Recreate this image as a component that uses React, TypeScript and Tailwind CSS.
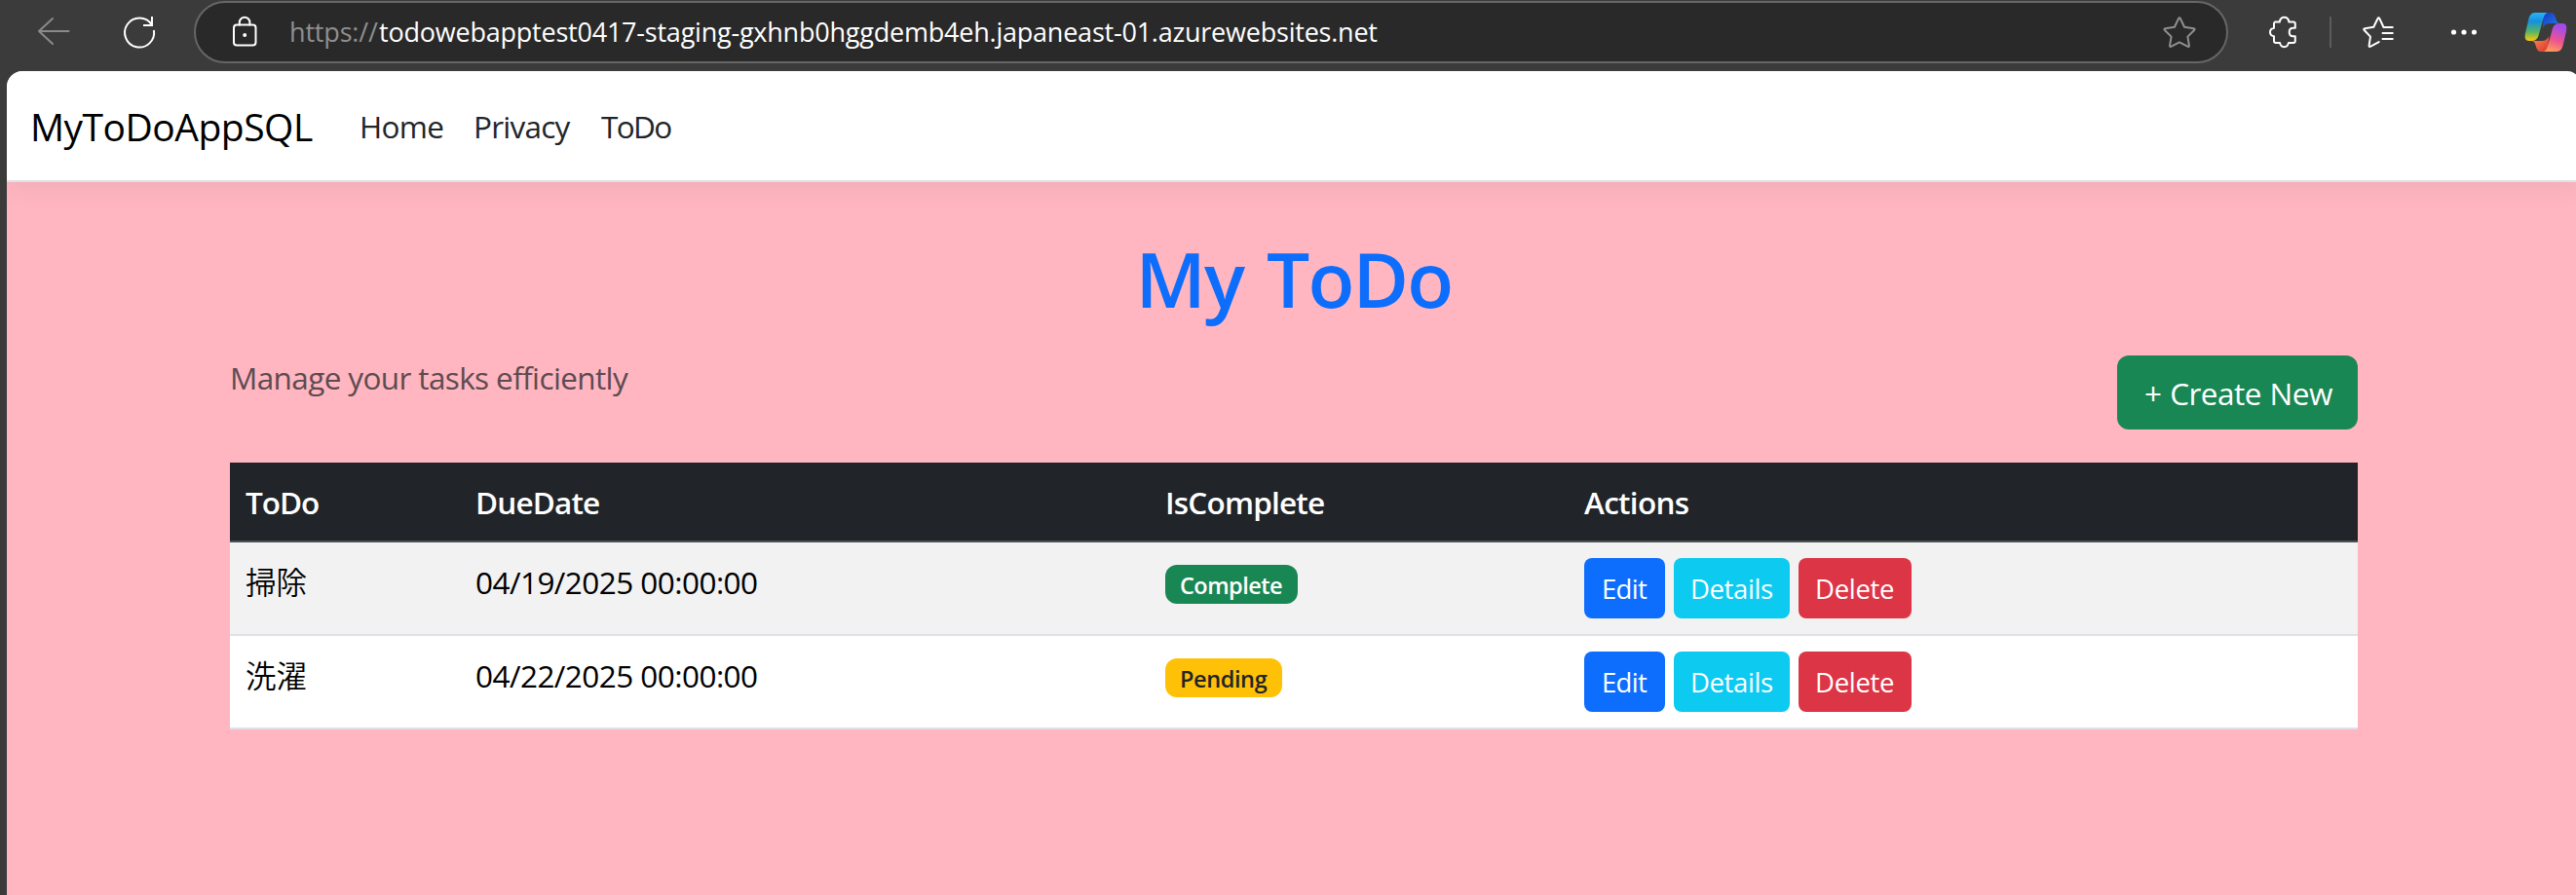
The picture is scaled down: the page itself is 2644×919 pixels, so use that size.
import React from "react";

const tasks = [
  { name: "掃除", due: "04/19/2025 00:00:00", complete: true },
  { name: "洗濯", due: "04/22/2025 00:00:00", complete: false },
];

const iconProps = {
  viewBox: "0 0 40 40",
  fill: "none",
  stroke: "currentColor",
  strokeWidth: 2,
  strokeLinecap: "round" as const,
  strokeLinejoin: "round" as const,
};

function BackIcon() {
  return (
    <svg {...iconProps} className="ml-9 size-10 shrink-0 text-[#8a8a8a]">
      <path d="M34.5 19H4M18 6 4 19l14 13" />
    </svg>
  );
}

function ReloadIcon() {
  return (
    <svg {...iconProps} strokeLinecap="butt" strokeLinejoin="miter" className="ml-[47px] size-10 shrink-0 text-white">
      <path d="M34.9 18A15 15 0 1 1 32.6 12.2" />
      <path d="M33 4v9h-9" />
    </svg>
  );
}

function LockIcon() {
  return (
    <svg {...iconProps} className="ml-[30px] size-10 shrink-0 text-white">
      <rect x="9" y="12.5" width="22.5" height="21" rx="3" />
      <path d="M14.8 12.5V10a5.3 5.3 0 0 1 10.6 0v2.5" />
      <circle cx="20.2" cy="23" r="2" fill="currentColor" stroke="none" />
    </svg>
  );
}

function StarIcon() {
  return (
    <svg {...iconProps} className="mr-7 size-10 shrink-0 text-[#8f8f8f]">
      <path d="M19 6.2q1-1.8 2 0l4.1 8.6 9.4 1.4q1.9.4.6 1.8l-6.7 6.6 1.5 9q.2 2-1.6 1.1L20 30.400l-8.300 4.300q-1.800.9-1.600-1.100l1.500-9L4.900 18q-1.300-1.400.6-1.800l9.400-1.400z" />
    </svg>
  );
}

function PuzzleIcon() {
  return (
    <svg {...iconProps} className="ml-[37px] size-10 shrink-0 text-white">
      <path d="M11 9.500h4.800c.5-3.200 2.200-4.700 4.800-4.700s4.300 1.500 4.800 4.700h4.400a2 2 0 0 1 2 2v4.300h-2c-2.500 0-4.100 1.600-4.100 4.200s1.600 4.300 4.100 4.300h2v4.800a2 2 0 0 1-2 2h-4.900c-.6 2.800-2.100 4.100-4.400 4.100s-3.800-1.300-4.400-4.100h-4.100a2 2 0 0 1-2-2v-4.800c-2.700-.5-4-2-4-4.300s1.300-3.700 4-4.200v-4.300a2 2 0 0 1 1-2z" />
    </svg>
  );
}

function FavoritesIcon() {
  return (
    <svg {...iconProps} className="ml-7 size-10 shrink-0 text-white">
      <path d="M34.800 15h-9.300l-4.100-8.800q-1-1.800-2 0l-4.100 8.600-9 1.400q-1.900.4-.6 1.800l6.300 6.600-1.400 9q-.2 2 1.600 1.100l8.500-4.600M24.500 21h10.300M24.500 27h10.300" />
    </svg>
  );
}

function MoreIcon() {
  return (
    <svg viewBox="0 0 40 40" className="ml-12 size-10 shrink-0 fill-white">
      <circle cx="9.500" cy="20" r="2.600" />
      <circle cx="20" cy="20" r="2.600" />
      <circle cx="30.500" cy="20" r="2.600" />
    </svg>
  );
}

function CopilotIcon() {
  return (
    <svg viewBox="0 0 50 50" className="ml-[39px] size-[50px] shrink-0">
      <defs>
        <linearGradient id="cool" x1="0" y1="0" x2="0" y2="1">
          <stop offset="0" stopColor="#2bb5f5" />
          <stop offset=".3" stopColor="#1490df" />
          <stop offset=".68" stopColor="#58b562" />
          <stop offset="1" stopColor="#ffca05" />
        </linearGradient>
        <linearGradient id="warm" x1=".3" y1="0" x2="0" y2="1">
          <stop offset="0" stopColor="#a34be8" />
          <stop offset=".5" stopColor="#f0558e" />
          <stop offset="1" stopColor="#ffb04f" />
        </linearGradient>
        <linearGradient id="blue" x1="0" y1="0" x2="1" y2="1">
          <stop offset="0" stopColor="#1738c0" />
          <stop offset="1" stopColor="#2382f0" />
        </linearGradient>
        <linearGradient id="red" x1="0" y1="0" x2="1" y2="1">
          <stop offset="0" stopColor="#ff9252" />
          <stop offset="1" stopColor="#d9342f" />
        </linearGradient>
      </defs>
      <path d="M23 5h7c3 0 4 2 5 5 1 4 2 6 5 6h-8c-5 0-8 0-10 5z" fill="url(#blue)" />
      <path d="M27 45h-7c-3 0-4-2-5-5-1-4-2-6-5-6h8c5 0 8 0 10-5z" fill="url(#red)" />
      <path d="M14 5h13.500c-3 0-4 3-5 6l-4.500 16c-1 4-3 7-7 7H8c-4 0-5-3-4-8l3-13c1-5 3-8 7-8z" fill="url(#cool)" />
      <path d="M36 45H22c3 0 4-3 5-6l4.500-16c1-4 3-7 7-7H42c4 0 5 3 4 8l-3 13c-1 5-3 8-7 8z" fill="url(#warm)" />
    </svg>
  );
}

function Toolbar() {
  return (
    <div className="flex h-[73px] items-start">
      <div className="flex h-[66px] items-center">
        <BackIcon />
        <ReloadIcon />
        <div className="ml-9 flex h-16 w-[2088px] items-center rounded-full border-2 border-[#666] bg-[#292929]">
          <LockIcon />
          <div className="ml-[26px] flex flex-1 text-[27px] leading-10 whitespace-nowrap text-white">
            <span className="w-[92px] tracking-[-0.17px] text-[#8f8f8f]">https://</span>
            <span className="tracking-[-0.22px]">todowebapptest0417-staging-gxhnb0hggdemb4eh.japaneast-01.azurewebsites.net</span>
          </div>
          <StarIcon />
        </div>
        <PuzzleIcon />
        <div className="ml-[27px] h-8 w-0.5 bg-[#5c5c5c]" />
        <FavoritesIcon />
        <MoreIcon />
        <CopilotIcon />
      </div>
    </div>
  );
}

function Navbar() {
  return (
    <nav className="flex h-[114px] items-center border-b-2 border-[#dee2e6] bg-white pb-px shadow-[0_8px_24px_rgba(0,0,0,0.05)]">
      <a className="ml-6 w-[338px] pt-0.5 text-[39px] leading-[60px] tracking-[-0.5px] text-black">MyToDoAppSQL</a>
      <a className="w-[117px] pt-0.5 text-[31.5px] leading-[48px] tracking-[-0.7px] text-[#212529]">Home</a>
      <a className="w-[131px] pt-0.5 text-[31.5px] leading-[48px] tracking-[-0.75px] text-[#212529]">Privacy</a>
      <a className="pt-0.5 text-[31.5px] leading-[48px] tracking-[-1.6px] text-[#212529]">ToDo</a>
    </nav>
  );
}

function TaskTable() {
  return (
    <table className="w-full table-fixed border-collapse text-left">
      <colgroup>
        <col className="w-[236px]" />
        <col className="w-[708px]" />
        <col className="w-[430px]" />
        <col className="w-[810px]" />
      </colgroup>
      <thead>
        <tr className="h-[82px] bg-[#212529] text-[31.5px] leading-[48px] font-semibold text-white shadow-[inset_0_-2px_0_#4d5154]">
          <th className="px-4 font-semibold tracking-[-1px]">ToDo</th>
          <th className="px-4 font-semibold tracking-[-0.84px]">DueDate</th>
          <th className="px-4 font-semibold tracking-[-0.8px]">IsComplete</th>
          <th className="px-4 font-semibold tracking-[-0.7px]">Actions</th>
        </tr>
      </thead>
      <tbody>
        {tasks.map((task) => (
          <tr
            key={task.name}
            className="h-24 align-top text-[31.5px] leading-[48px] text-black shadow-[inset_0_-2px_0_#dee2e6] odd:bg-[#f2f2f2] even:bg-white"
          >
            <td className="px-4 pt-[15px] font-['Noto_Sans_CJK_JP','Open_Sans',sans-serif] font-[350]">{task.name}</td>
            <td className="px-4 pt-[17px] tracking-[-0.55px]">{task.due}</td>
            <td className="px-4 pt-[23px]">
              {task.complete ? (
                <div className="flex h-10 w-34 items-center rounded-xl bg-[#198754] pt-0.5 pl-[15px] text-[23.5px] font-semibold tracking-[-0.53px] text-white">
                  Complete
                </div>
              ) : (
                <div className="flex h-10 w-30 items-center rounded-xl bg-[#ffc107] pt-0.5 pl-[15px] text-[23.5px] font-semibold tracking-[-0.4px] text-[#212529]">
                  Pending
                </div>
              )}
            </td>
            <td className="px-4 pt-4">
              <div className="flex gap-[9px] text-[27.5px] text-white">
                <button className="h-[62px] w-[83px] rounded-lg bg-[#0d6efd] pt-0.5 pl-[18px] text-left tracking-[-0.68px]">Edit</button>
                <button className="h-[62px] w-[119px] rounded-lg bg-[#0dcaf0] pt-0.5 pl-[17px] text-left tracking-[-0.39px]">Details</button>
                <button className="h-[62px] w-[116px] rounded-lg bg-[#dc3545] pt-0.5 pl-[17px] text-left tracking-[-0.32px]">Delete</button>
              </div>
            </td>
          </tr>
        ))}
      </tbody>
    </table>
  );
}

export default function App() {
  return (
    <div className="h-[919px] w-[2644px] overflow-hidden bg-[#3b3b3b] font-['Open_Sans','Noto_Sans_CJK_JP',sans-serif]">
      <Toolbar />
      <div className="ml-[7px] h-[846px] w-[2643px] overflow-hidden rounded-t-2xl bg-[#ffb6c1]">
        <Navbar />
        <main className="ml-[229px] w-[2184px] pt-[51px]">
          <h1 className="h-24 text-center text-[78.5px] leading-[96px] font-semibold tracking-[-1.8px] text-[#0d6efd] [word-spacing:5px]">My ToDo</h1>
          <div className="mt-[31px] mb-[34px] flex h-[76px] items-start justify-between">
            <p className="-mt-px text-[31.5px] leading-[48px] tracking-[-0.62px] text-[#5d4b50]">Manage your tasks efficiently</p>
            <button className="flex h-[76px] w-[247px] items-center rounded-xl bg-[#198754] pt-0.5 pl-[28px] text-[31.5px] tracking-[-0.51px] [word-spacing:1px] whitespace-nowrap text-white">
              + Create New
            </button>
          </div>
          <TaskTable />
        </main>
      </div>
    </div>
  );
}
